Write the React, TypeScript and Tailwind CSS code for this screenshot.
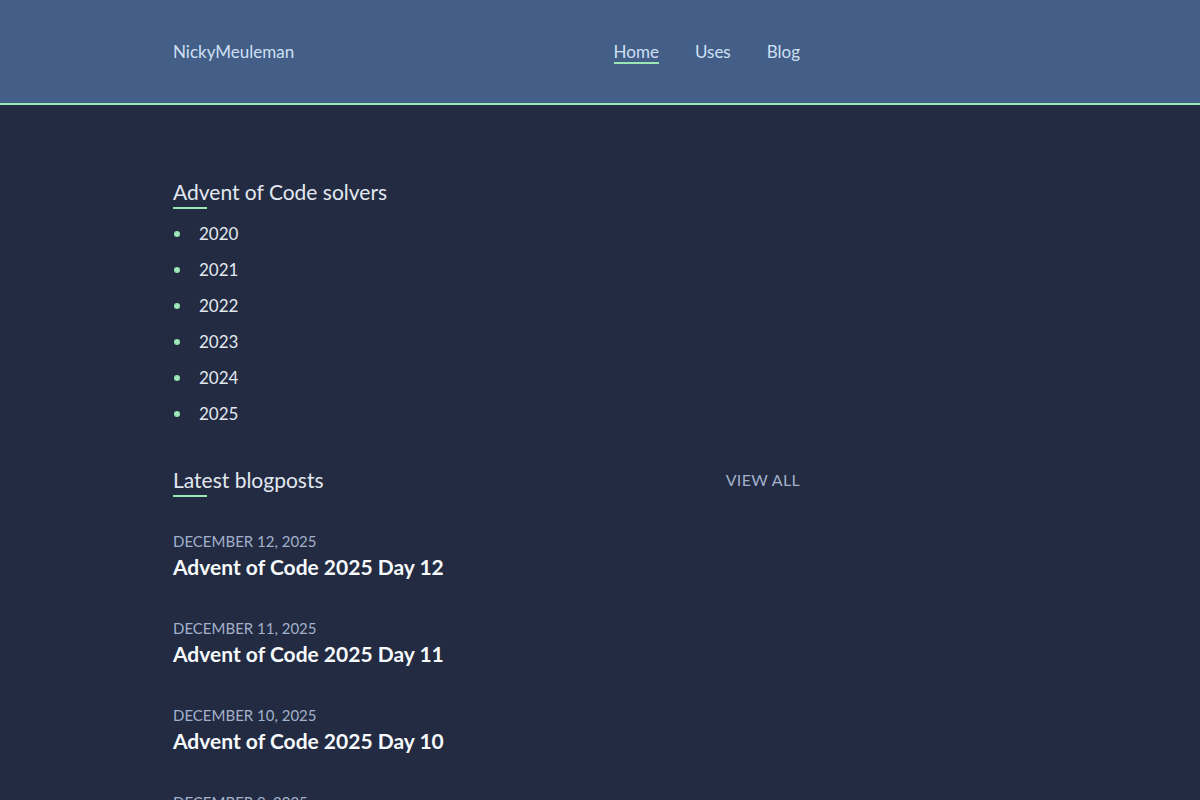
const years = ["2020", "2021", "2022", "2023", "2024", "2025"];

const posts = [
  { date: "December 12, 2025", title: "Advent of Code 2025 Day 12" },
  { date: "December 11, 2025", title: "Advent of Code 2025 Day 11" },
  { date: "December 10, 2025", title: "Advent of Code 2025 Day 10" },
  { date: "December 9, 2025", title: "Advent of Code 2025 Day 9" },
];

function SectionTitle({ children }: { children: React.ReactNode }) {
  return (
    <h2 className="relative inline-block text-[21px] leading-[30px] text-[#e2e8f0]">
      {children}
      <span className="absolute -bottom-[2px] left-0 h-[2px] w-[34px] bg-[#9ae6b4]" />
    </h2>
  );
}

export default function App() {
  return (
    <div className="h-[800px] overflow-hidden bg-[#222b41] font-['Lato','Noto_Sans',sans-serif]">
      <header className="h-[105px] border-b-2 border-[#9ae6b4] bg-[#435e87]">
        <div className="ml-[173px] flex h-[103px] w-[627px] items-center justify-between">
          <a className="text-[17px] leading-[24px] text-[#cfe0f5]">NickyMeuleman</a>
          <nav className="flex gap-[36px] text-[17px] leading-[24px] text-[#cfe0f5]">
            <a className="relative">
              Home
              <span className="absolute bottom-0 left-0 h-[2px] w-full bg-[#9ae6b4]" />
            </a>
            <a>Uses</a>
            <a>Blog</a>
          </nav>
        </div>
      </header>
      <main className="ml-[173px] w-[627px] pt-[72px]">
        <SectionTitle>Advent of Code solvers</SectionTitle>
        <ul className="mt-[15px] flex flex-col gap-[12px]">
          {years.map((y) => (
            <li key={y} className="flex items-center text-[17px] leading-[24px] text-[#e2e8f0]">
              <span className="ml-[1px] mr-[19px] h-[6px] w-[6px] rounded-full bg-[#9ae6b4]" />
              {y}
            </li>
          ))}
        </ul>
        <div className="mt-[39px] flex items-center justify-between">
          <SectionTitle>Latest blogposts</SectionTitle>
          <a className="text-[16px] uppercase tracking-[0.02em] text-[#a3b1cc]">View all</a>
        </div>
        <div className="mt-[35px] flex flex-col gap-[35px]">
          {posts.map((p) => (
            <article key={p.title} className="flex flex-col">
              <span className="text-[15px] uppercase leading-[22px] text-[#a3b1cc]">{p.date}</span>
              <span className="text-[21px] font-bold leading-[30px] text-[#f7fafc]">{p.title}</span>
            </article>
          ))}
        </div>
      </main>
    </div>
  );
}
